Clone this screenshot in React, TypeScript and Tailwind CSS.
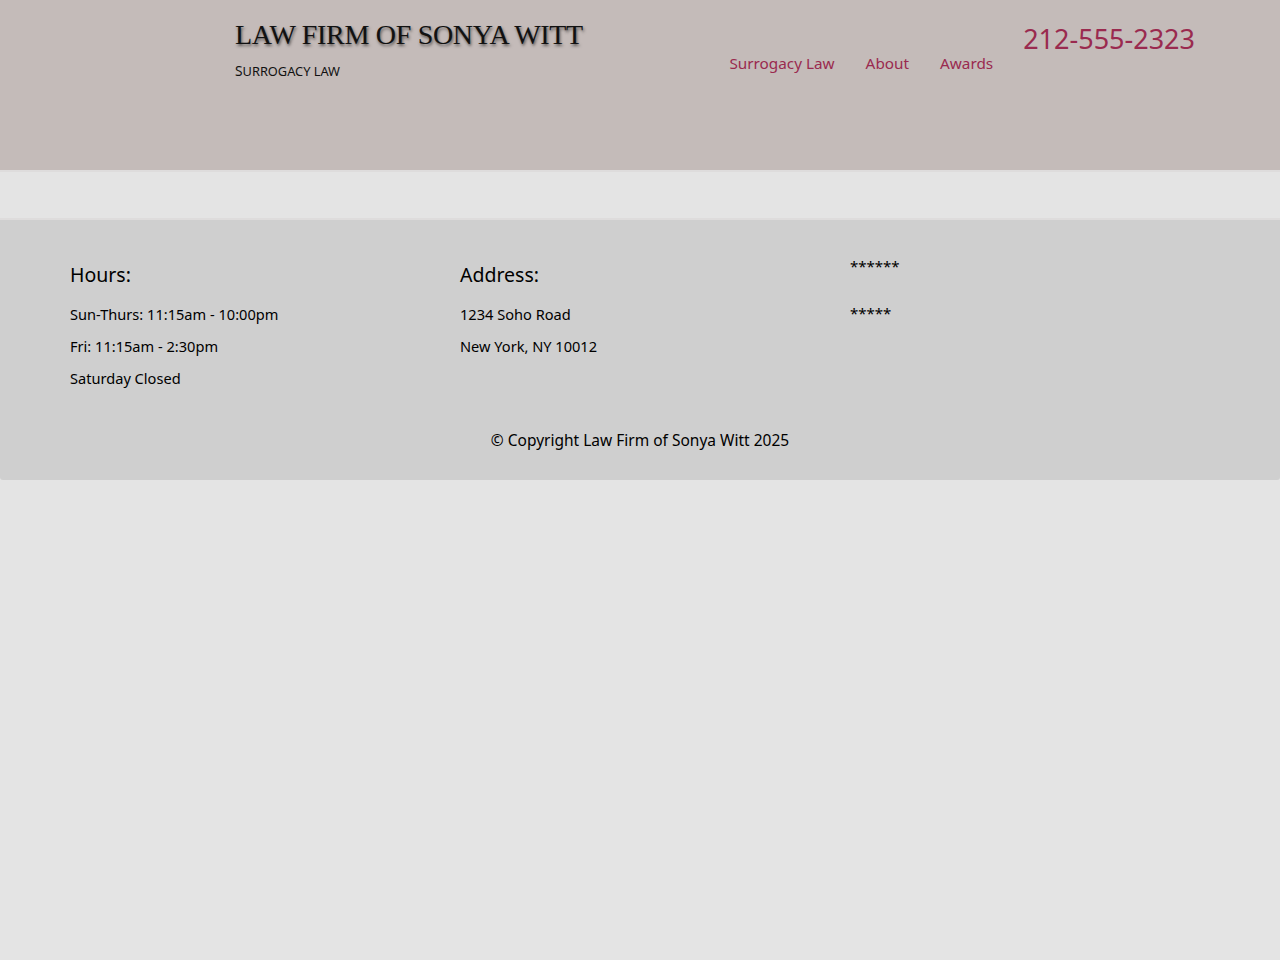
import React from 'react';

const sans = "font-['Noto_Sans',sans-serif]";

const App: React.FC = () => {
  return (
    <div className={`min-h-screen bg-[#e4e4e4] text-black ${sans}`}>
      <header className="h-[170px] bg-[#c4bbb9]">
        <div className="flex pl-[235px] pr-[85px] pt-[17px]">
          <div className="flex flex-col">
            <h1 className="font-['Liberation_Serif',serif] text-[28px] leading-[36px] tracking-[-0.3px] text-[#111] [text-shadow:1px_2px_3px_rgba(0,0,0,0.55)]">
              LAW FIRM OF SONYA WITT
            </h1>
            <p className="mt-[9px] text-[12.8px] leading-[18px] uppercase text-[#111]">
              <span className="text-[13.8px]">S</span>urrogacy Law
            </p>
          </div>
          <nav className="ml-auto flex items-start gap-[31px] pt-[35px] text-[15.3px] text-[#9a2a4f]">
            <a>Surrogacy Law</a>
            <a>About</a>
            <a>Awards</a>
          </nav>
          <div className="ml-[30px] text-[27px] leading-[44px] text-[#9a2a4f]">212-555-2323</div>
        </div>
      </header>
      <div className="h-[50px] border-t-2 border-b-2 border-[#dedcdc]" />
      <footer className="rounded-b-[3px] bg-[#cfcfcf] pl-[70px] pr-[40px] pt-[40px] pb-[28px]">
        <div className="grid grid-cols-3">
          <div>
            <h3 className="text-[19.5px] leading-[30px]">Hours:</h3>
            <p className="mt-[8px] text-[14.6px] leading-[32px]">Sun-Thurs: 11:15am - 10:00pm</p>
            <p className="text-[14.6px] leading-[32px]">Fri: 11:15am - 2:30pm</p>
            <p className="text-[14.6px] leading-[32px]">Saturday Closed</p>
          </div>
          <div>
            <h3 className="text-[19.5px] leading-[30px]">Address:</h3>
            <p className="mt-[8px] text-[14.6px] leading-[32px]">1234 Soho Road</p>
            <p className="text-[14.6px] leading-[32px]">New York, NY 10012</p>
          </div>
          <div className="-mt-[6px]">
            <p className="text-[15px] leading-[24px]">******</p>
            <p className="mt-[23px] text-[15px] leading-[24px]">*****</p>
          </div>
        </div>
        <p className="mt-[34px] -ml-[30px] text-center text-[15.5px] leading-[24px]">© Copyright Law Firm of Sonya Witt 2025</p>
      </footer>
    </div>
  );
};

export default App;
